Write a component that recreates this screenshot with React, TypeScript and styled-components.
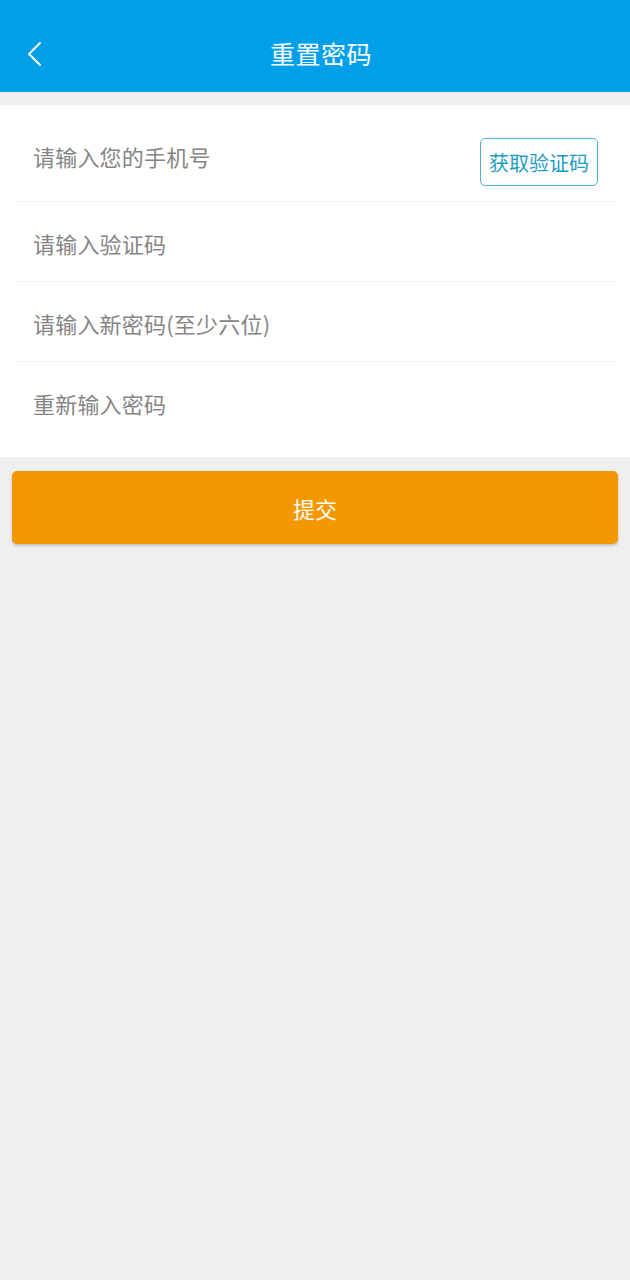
import React from "react";
import styled, { createGlobalStyle } from "styled-components";

const Global = createGlobalStyle`
  html, body { margin: 0; padding: 0; background: #efefef; }
  body { font-family: "Noto Sans CJK SC", "Noto Sans", sans-serif; }
`;

const Page = styled.div`
  width: 630px;
  min-height: 1280px;
  background: #efefef;
  display: flex;
  flex-direction: column;
`;

const Header = styled.header`
  height: 92px;
  background: #00a0e8;
  display: flex;
  align-items: center;
  justify-content: center;
  position: relative;
`;

const BackButton = styled.button`
  position: absolute;
  left: 20px;
  top: 35px;
  width: 30px;
  height: 38px;
  border: none;
  background: transparent;
  padding: 0;
  display: flex;
  align-items: center;
  justify-content: center;
`;

const Title = styled.h1`
  margin: 0;
  padding: 14px 0 0 12px;
  color: #ffffff;
  font-size: 25px;
  font-weight: 400;
  letter-spacing: 0.5px;
`;

const Panel = styled.section`
  margin-top: 13px;
  background: #ffffff;
  padding: 0 16px 15px;
  display: flex;
  flex-direction: column;
`;

const Row = styled.div<{ $first?: boolean; $last?: boolean }>`
  box-sizing: border-box;
  height: ${(p) => (p.$first ? "97px" : "80px")};
  padding-top: ${(p) => (p.$first ? "17px" : "0")};
  display: flex;
  align-items: center;
  justify-content: space-between;
  border-bottom: ${(p) => (p.$last ? "none" : "1px solid #f0f0f0")};
`;

const Label = styled.span<{ $shift?: number }>`
  padding-left: 17px;
  font-size: 22px;
  letter-spacing: 0.2px;
  color: #858585;
  transform: translateY(${(p) => p.$shift ?? 1}px);
`;

const CodeButton = styled.button`
  width: 118px;
  height: 48px;
  margin: 1px 16px 0 0;
  border: 1.5px solid #52b4cc;
  border-radius: 5px;
  background: #ffffff;
  color: #1c9bc3;
  font-family: "Noto Sans CJK SC", sans-serif;
  font-size: 20px;
  padding: 0;
  display: flex;
  align-items: center;
  justify-content: center;
`;

const Submit = styled.button`
  margin: 14px 12px 0;
  height: 73px;
  border: none;
  border-radius: 5px;
  background: #f39800;
  color: #ffffff;
  font-family: "Noto Sans CJK SC", sans-serif;
  font-size: 22px;
  box-shadow: 0 2px 3px rgba(0, 0, 0, 0.18);
`;

export default function App() {
  return (
    <Page>
      <Global />
      <Header>
        <BackButton aria-label="back">
          <svg width="20" height="26" viewBox="0 0 20 26">
            <polyline points="15,2 4,13 15,24" fill="none" stroke="#fff" strokeWidth="2" strokeLinecap="round" strokeLinejoin="round" />
          </svg>
        </BackButton>
        <Title>重置密码</Title>
      </Header>
      <Panel>
        <Row $first>
          <Label $shift={-6}>请输入您的手机号</Label>
          <CodeButton>获取验证码</CodeButton>
        </Row>
        <Row>
          <Label>请输入验证码</Label>
        </Row>
        <Row>
          <Label>请输入新密码(至少六位)</Label>
        </Row>
        <Row $last>
          <Label>重新输入密码</Label>
        </Row>
      </Panel>
      <Submit>提交</Submit>
    </Page>
  );
}
